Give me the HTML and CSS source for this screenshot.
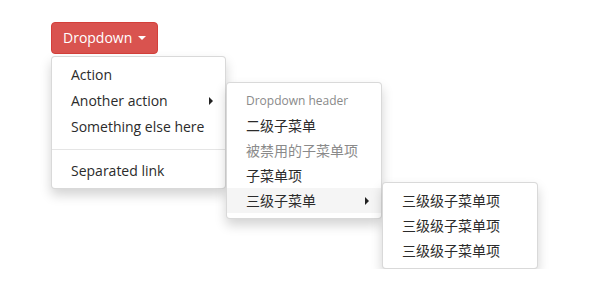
FILE: index.html
```html
<!DOCTYPE html>
<html lang="zh-CN">
<head>
    <meta charset="UTF-8">
    <title>Dropdown</title>
    <link rel="stylesheet" href="styles.css">
</head>
<body>
    <button class="btn-red">Dropdown <span class="caret-down"></span></button>

    <div class="menus">
        <!-- level 1 -->
        <div class="menu menu-main">
            <div class="item">Action</div>
            <div class="item">Another action <span class="arrow"></span></div>
            <div class="item">Something else here</div>
            <div class="sep"></div>
            <div class="item">Separated link</div>
        </div>

        <!-- level 2 -->
        <div class="menu menu-second cjk">
            <div class="menu-header">Dropdown header</div>
            <div class="item">二级子菜单</div>
            <div class="item muted">被禁用的子菜单项</div>
            <div class="item">子菜单项</div>
            <div class="item current">三级子菜单 <span class="arrow"></span></div>
        </div>

        <!-- level 3 -->
        <div class="menu menu-third cjk">
            <div class="item">三级级子菜单项</div>
            <div class="item">三级级子菜单项</div>
            <div class="item">三级级子菜单项</div>
        </div>
    </div>
</body>
</html>
```

FILE: styles.css
```css
* {
    margin: 0;
    padding: 0;
    box-sizing: border-box;
}

body {
    font-family: 'Open Sans', 'Noto Sans CJK SC', sans-serif;
    font-size: 14px;
    color: #333;
    background: #fff;
    padding: 22px 0 0 51px;
}

.btn-red {
    font-family: inherit;
    font-size: 14px;
    line-height: 20px;
    color: #fff;
    background: #d9534f;
    border: 1px solid #d43f3a;
    border-radius: 4px;
    padding: 5px 11px;
    display: flex;
    align-items: center;
    gap: 6px;
}

.caret-down {
    width: 0;
    height: 0;
    border-top: 4px solid #fff;
    border-left: 4px solid transparent;
    border-right: 4px solid transparent;
}

.menus {
    display: flex;
    align-items: flex-start;
    margin-top: 2px;
}

.menu {
    background: #fff;
    border: 1px solid rgba(0, 0, 0, 0.15);
    border-radius: 4px;
    box-shadow: 0 6px 12px rgba(0, 0, 0, 0.175);
    padding: 5px 0;
    flex: none;
}

.menu-main {
    width: 175px;
    padding-bottom: 4px;
}

.menu-second {
    width: 156px;
    margin-top: 26px;
}

.menu-third {
    width: 156px;
    margin-top: 126px;
}

.item {
    display: flex;
    align-items: center;
    justify-content: space-between;
    padding: 3px 12px 3px 19px;
    line-height: 20px;
    color: #2b2b2b;
    white-space: nowrap;
}

.cjk .item {
    font-size: 14px;
    line-height: 19px;
}

.menu-header {
    font-size: 12px;
    line-height: 19px;
    padding: 3px 19px;
    color: #8a8a8a;
}

.cjk .muted {
    color: #8a8a8a;
}

.cjk .current {
    background: #f5f5f5;
}

.arrow {
    width: 0;
    height: 0;
    border-left: 4px solid #222;
    border-top: 4px solid transparent;
    border-bottom: 4px solid transparent;
}

.sep {
    height: 1px;
    margin: 9px 0 8px;
    background: #e5e5e5;
}
```
